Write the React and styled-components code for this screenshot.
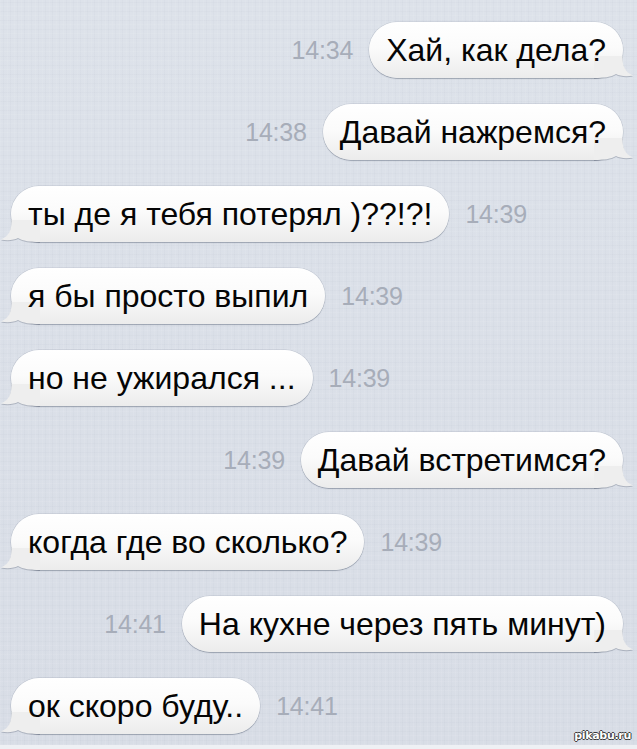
import React from 'react';
import styled, { createGlobalStyle } from 'styled-components';

const GlobalStyle = createGlobalStyle`
  html, body {
    margin: 0;
    padding: 0;
  }
  body {
    background: #dbe0e9;
    font-family: "Liberation Sans", Arial, sans-serif;
  }
`;

const Screen = styled.div`
  position: relative;
  width: 637px;
  height: 749px;
  overflow: hidden;
  box-sizing: border-box;
  padding-top: 22px;
  display: flex;
  flex-direction: column;
  gap: 26px;
  background-color: #dbe0e9;
  background-image:
    repeating-linear-gradient(90deg, rgba(255,255,255,0.07) 0 1px, transparent 1px 3px, rgba(120,130,150,0.035) 3px 4px, transparent 4px 7px),
    repeating-linear-gradient(0deg, rgba(255,255,255,0.07) 0 1px, transparent 1px 4px, rgba(120,130,150,0.035) 4px 5px, transparent 5px 9px),
    linear-gradient(180deg, #dde2ea 0%, #d8dde6 100%);
  border-bottom: 4px solid #eef0f4;
`;

const Row = styled.div`
  display: flex;
  align-items: center;
  gap: 16px;
  justify-content: flex-end;
  flex-direction: ${p => (p.$mine ? 'row' : 'row-reverse')};
  padding: ${p => (p.$mine ? '0 14px 0 0' : '0 0 0 11px')};
`;

const Time = styled.span`
  font-size: 25px;
  color: #a7adb9;
  letter-spacing: -0.2px;
`;

const Bubble = styled.div`
  position: relative;
  height: 56px;
  line-height: 56px;
  padding: 0 17px;
  border-radius: 28px;
  font-size: 32px;
  color: #050505;
  white-space: nowrap;
  background: linear-gradient(180deg, #ffffff 0%, #fbfbfb 45%, #ececec 100%);
  box-shadow: 0 1px 1px rgba(70, 80, 100, 0.35), 0 0 0 0.5px rgba(120, 128, 145, 0.3);
`;

const Tail = styled.svg`
  position: absolute;
  bottom: 0;
  width: 40px;
  height: 22px;
  ${p => (p.$mine ? 'right: -11px; transform: scaleX(-1);' : 'left: -11px;')}
  filter: drop-shadow(0 1px 0.5px rgba(70, 80, 100, 0.3));
`;

const Label = styled.span`
  position: relative;
  z-index: 1;
`;

const Watermark = styled.div`
  position: absolute;
  right: 6px;
  bottom: 3px;
  font-family: "DejaVu Sans", sans-serif;
  font-size: 11px;
  font-weight: bold;
  color: #ffffff;
  letter-spacing: -0.3px;
  text-shadow: -1px 0 #3a3a3a, 1px 0 #3a3a3a, 0 -1px #3a3a3a, 0 1px #3a3a3a;
`;

const messages = [
  { text: 'Хай, как дела?', time: '14:34', mine: true },
  { text: 'Давай нажремся?', time: '14:38', mine: true },
  { text: 'ты де я тебя потерял )??!?!', time: '14:39', mine: false },
  { text: 'я бы просто выпил', time: '14:39', mine: false },
  { text: 'но не ужирался ...', time: '14:39', mine: false },
  { text: 'Давай встретимся?', time: '14:39', mine: true },
  { text: 'когда где во сколько?', time: '14:39', mine: false },
  { text: 'На кухне через пять минут)', time: '14:41', mine: true },
  { text: 'ок скоро буду..', time: '14:41', mine: false },
];

const BubbleTail = ({ mine }) => (
  <Tail $mine={mine} viewBox="0 0 40 22">
    <path
      d="M11.6 0 C11.6 10 9 16 1 19.5 C8 21 14 20 18 18 C23 21 30 22 40 22 L40 0 Z"
      fill="#eeeeee"
    />
  </Tail>
);

const App = () => (
  <>
    <GlobalStyle />
    <Screen>
      {messages.map((m, i) => (
        <Row key={i} $mine={m.mine}>
          <Time>{m.time}</Time>
          <Bubble>
            <BubbleTail mine={m.mine} />
            <Label>{m.text}</Label>
          </Bubble>
        </Row>
      ))}
      <Watermark>pikabu.ru</Watermark>
    </Screen>
  </>
);

export default App;
